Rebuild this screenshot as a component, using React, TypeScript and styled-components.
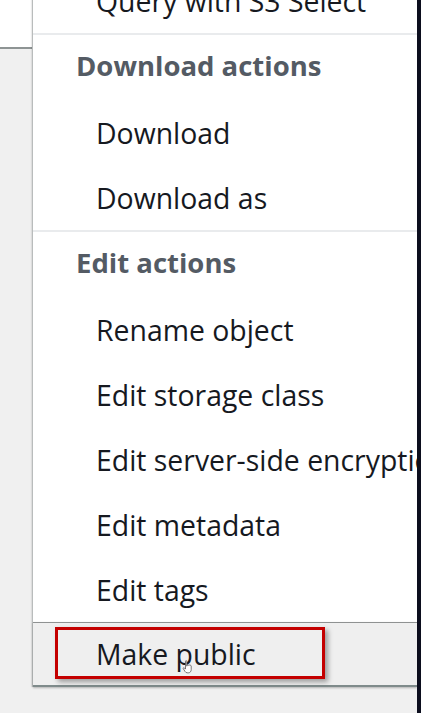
import styled, { createGlobalStyle } from 'styled-components';

const GlobalStyle = createGlobalStyle`
  html, body {
    margin: 0;
    padding: 0;
    background: #f0f0f0;
  }
  body {
    font-family: "Open Sans", "Liberation Sans", sans-serif;
  }
`;

const Page = styled.div`
  display: flex;
  width: 421px;
  height: 713px;
  overflow: hidden;
  background: #f0f0f0;
`;

const SideColumn = styled.div`
  width: 32px;
  flex-shrink: 0;
  display: flex;
  flex-direction: column;
`;

const SideTop = styled.div`
  height: 47px;
  background: #ffffff;
  border-bottom: 2px solid #8e9494;
`;

const MenuColumn = styled.div`
  width: 385px;
  flex-shrink: 0;
  display: flex;
  flex-direction: column;
`;

const Menu = styled.ul`
  list-style: none;
  margin: -32px 0 0;
  padding: 0;
  background: #ffffff;
  border-left: 1px solid #b9bcbc;
  box-shadow: -1px 0 1px rgba(0, 0, 0, 0.08);
`;

const Group = styled.li<{ $first?: boolean }>`
  border-top: ${p => (p.$first ? 'none' : '2px solid #e9ebed')};
`;

const GroupTitle = styled.div`
  height: 65px;
  box-sizing: border-box;
  padding-bottom: 5px;
  display: flex;
  align-items: center;
  padding-left: 43px;
  font-size: 27.5px;
  font-weight: 700;
  color: #545b64;
  white-space: nowrap;
`;

const Item = styled.div<{ $hover?: boolean }>`
  position: relative;
  height: 65px;
  display: flex;
  align-items: center;
  padding-left: 63px;
  font-size: 28.4px;
  color: #16191f;
  white-space: nowrap;
  overflow: hidden;
  background: ${p => (p.$hover ? '#efefef' : 'transparent')};
  ${p =>
    p.$hover &&
    `
    border-top: 1px solid #8f9292;
    border-bottom: 2px solid #7f8b8b;
    height: 62px;
    box-shadow: 0 1px 2px rgba(0, 0, 0, 0.25);
    overflow: visible;
  `}
`;

const Highlight = styled.span`
  position: absolute;
  left: 22px;
  top: 4px;
  width: 264px;
  height: 46px;
  border: 3px solid #c40000;
  box-shadow: 3px 3px 5px rgba(0, 0, 0, 0.35);
  pointer-events: none;
`;

const Cursor = styled.svg`
  position: absolute;
  left: 149px;
  top: 37px;
`;

const Strip = styled.div`
  flex: 1;
  background: #0c0e1e;
`;

function HandCursor() {
  return (
    <Cursor width="12" height="14" viewBox="0 0 12 14">
      <path
        d="M3.5 1.2c0-.7 1.3-.7 1.3 0v5l.3-1.2c.5-.6 1.3-.3 1.3.3l.2-.2c.5-.5 1.3-.2 1.3.4.5-.4 1.3-.1 1.3.5v3.6c0 1.6-1 3.2-2.6 3.2H5.2c-1 0-1.7-.6-2.2-1.4L1.3 8.7c-.4-.7.5-1.3 1-.8l1.2 1.2z"
        fill="#ffffff"
        stroke="#555"
        strokeWidth="0.8"
      />
    </Cursor>
  );
}

export default function App() {
  return (
    <>
      <GlobalStyle />
      <Page>
        <SideColumn>
          <SideTop />
        </SideColumn>
        <MenuColumn>
          <Menu>
            <Group $first>
              <Item>Query with S3 Select</Item>
            </Group>
            <Group>
              <GroupTitle>Download actions</GroupTitle>
              <Item>Download</Item>
              <Item>Download as</Item>
            </Group>
            <Group>
              <GroupTitle>Edit actions</GroupTitle>
              <Item>Rename object</Item>
              <Item>Edit storage class</Item>
              <Item>Edit server-side encryption</Item>
              <Item>Edit metadata</Item>
              <Item>Edit tags</Item>
              <Item $hover>
                Make public
                <Highlight />
                <HandCursor />
              </Item>
            </Group>
          </Menu>
        </MenuColumn>
        <Strip />
      </Page>
    </>
  );
}
